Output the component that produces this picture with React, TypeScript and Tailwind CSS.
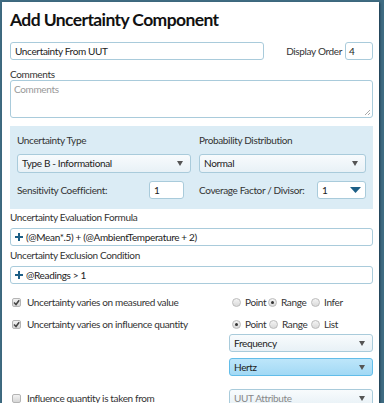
import React from "react";

const font = { fontFamily: "Lato, 'Open Sans', sans-serif" };

function Arrow() {
  return (
    <svg width="6" height="5" viewBox="0 0 6 5" className="shrink-0">
      <path d="M0 0 L6 0 L3 5 Z" fill="#555" />
    </svg>
  );
}

function Select({ value, className = "", hi = false, muted = false }: { value: string; className?: string; hi?: boolean; muted?: boolean }) {
  return (
    <div
      className={
        "flex items-center justify-between rounded-[3px] border pl-[4px] pr-[7px] " +
        (hi
          ? "border-[#62bde9] bg-gradient-to-b from-[#bde6fa] to-[#a2d9f5] text-[#222] "
          : "border-[#a9cbdb] bg-gradient-to-b from-[#f8fbfd] to-[#e8f1f6] " + (muted ? "text-[#888] " : "text-[#222] ")) +
        className
      }
    >
      <span>{value}</span>
      <Arrow />
    </div>
  );
}

function Check({ checked }: { checked: boolean }) {
  return (
    <div className="w-[9px] h-[9px] rounded-[2px] border border-[#b4b4b4] bg-gradient-to-b from-[#f2f2f2] to-[#d6d6d6] flex items-center justify-center shrink-0">
      {checked && (
        <svg width="7" height="7" viewBox="0 0 7 7">
          <path d="M1 3.5 L3 5.5 L6.2 1.2" stroke="#444" strokeWidth="1.5" fill="none" />
        </svg>
      )}
    </div>
  );
}

function Radio({ checked }: { checked: boolean }) {
  return (
    <div className="w-[9px] h-[9px] rounded-full border border-[#bbb] bg-gradient-to-b from-[#f4f4f4] to-[#dadada] flex items-center justify-center shrink-0">
      {checked && <div className="w-[3px] h-[3px] rounded-full bg-[#333]" />}
    </div>
  );
}

function Opt({ checked, label, w }: { checked: boolean; label: string; w: string }) {
  return (
    <div className={"flex items-center gap-[4px] " + w}>
      <Radio checked={checked} />
      <span>{label}</span>
    </div>
  );
}

function Plus() {
  return (
    <svg width="8" height="8" viewBox="0 0 8 8" className="shrink-0">
      <path d="M4 0 V8 M0 4 H8" stroke="#1d5f86" strokeWidth="2" />
    </svg>
  );
}

const txt = "text-[10px] tracking-[-0.35px] text-[#333]";

export default function App() {
  return (
    <div className="w-[384px] h-[403px] overflow-hidden bg-[#3f6c82] pt-[2px] pl-[2px]" style={font}>
      <div className={"w-[377px] h-[420px] bg-white shadow-[1px_1px_2px_rgba(0,20,40,0.6)] pl-[8px] pr-[6px] " + txt}>
        <div className="pt-[7px] h-[40px] text-[17.5px] tracking-[-0.6px] font-bold text-[#111] leading-[22px]">Add Uncertainty Component</div>

        <div className="flex items-center h-[18px]">
          <div className="w-[254px] h-[18px] rounded-[3px] border border-[#a9cbdb] flex items-center px-[4px] text-[#222]">
            Uncertainty From UUT
          </div>
          <div className="ml-auto mr-[3px]">Display Order</div>
          <div className="w-[28px] h-[18px] rounded-[3px] border border-[#a9cbdb] flex items-center px-[3px] text-[#222]">4</div>
        </div>

        <div className="mt-[8px] leading-[12px]">Comments</div>
        <div className="relative h-[38px] rounded-[3px] border border-[#a9cbdb] px-[3px] pt-[1px] text-[#999]">
          Comments
          <svg width="7" height="7" viewBox="0 0 7 7" className="absolute right-[1px] bottom-[1px]">
            <path d="M6 1 L1 6 M6 4 L4 6" stroke="#aaa" strokeWidth="1" />
          </svg>
        </div>

        <div className="mt-[8px] h-[83px] bg-[#dbecf5] px-[7px] pt-[8px]">
          <div className="flex leading-[12px]">
            <div className="w-[182px]">Uncertainty Type</div>
            <div>Probability Distribution</div>
          </div>
          <div className="flex mt-[8px]">
            <Select value="Type B - Informational" className="w-[174px] h-[19px]" />
            <Select value="Normal" className="w-[167px] h-[19px] ml-[8px]" />
          </div>
          <div className="flex items-center mt-[8px] h-[18px]">
            <div className="w-[132px]">Sensitivity Coefficient:</div>
            <div className="w-[35px] h-[18px] rounded-[3px] border border-[#a9cbdb] bg-white flex items-center px-[4px] text-[#222]">1</div>
            <div className="ml-[15px] w-[118px]">Coverage Factor / Divisor:</div>
            <div className="w-[49px] h-[18px] rounded-[3px] border border-[#a9cbdb] bg-white flex items-center justify-between pl-[4px] pr-[4px] text-[#222]">
              <span>1</span>
              <svg width="11" height="6" viewBox="0 0 11 6">
                <path d="M0 0 L11 0 L5.5 6 Z" fill="#1d5f86" />
              </svg>
            </div>
          </div>
        </div>

        <div className="mt-[2px] leading-[12px]">Uncertainty Evaluation Formula</div>
        <div className="mt-[5px] h-[18px] rounded-[3px] border border-[#a9cbdb] flex items-center gap-[3px] px-[4px] text-[#222]">
          <Plus />
          <span>(@Mean*.5) + (@AmbientTemperature + 2)</span>
        </div>
        <div className="mt-[3px] leading-[12px]">Uncertainty Exclusion Condition</div>
        <div className="mt-[5px] h-[18px] rounded-[3px] border border-[#a9cbdb] flex items-center gap-[3px] px-[4px] text-[#222]">
          <Plus />
          <span>@Readings &gt; 1</span>
        </div>

        <div className="flex items-center mt-[12px] h-[12px]">
          <div className="w-[222px] flex items-center gap-[6px] pl-[2px]">
            <Check checked />
            <span>Uncertainty varies on measured value</span>
          </div>
          <Opt checked={false} label="Point" w="w-[36px]" />
          <Opt checked label="Range" w="w-[43px]" />
          <Opt checked={false} label="Infer" w="" />
        </div>
        <div className="flex items-center mt-[10px] h-[12px]">
          <div className="w-[222px] flex items-center gap-[6px] pl-[2px]">
            <Check checked />
            <span>Uncertainty varies on influence quantity</span>
          </div>
          <Opt checked label="Point" w="w-[37px]" />
          <Opt checked={false} label="Range" w="w-[42px]" />
          <Opt checked={false} label="List" w="" />
        </div>

        <div className="ml-[219px] mt-[4px]">
          <Select value="Frequency" className="h-[18px]" />
          <Select value="Hertz" hi className="h-[18px] mt-[6px]" />
        </div>
        <div className="flex items-center mt-[13px]">
          <div className="w-[219px] flex items-center gap-[6px] pl-[2px]">
            <Check checked={false} />
            <span>Influence quantity is taken from</span>
          </div>
          <Select value="UUT Attribute" muted className="flex-1 h-[18px]" />
        </div>
      </div>
    </div>
  );
}
